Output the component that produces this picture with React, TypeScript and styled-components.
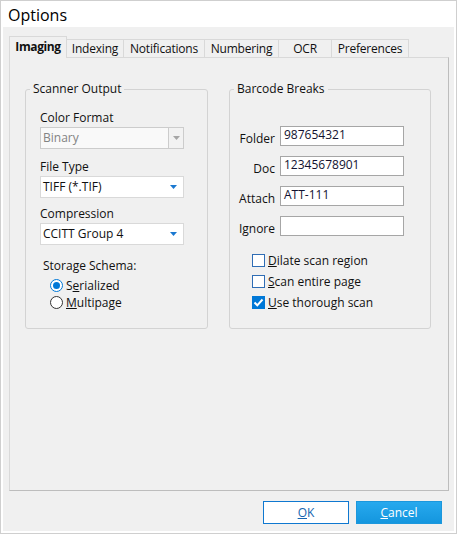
import React from 'react'
import styled, { createGlobalStyle } from 'styled-components'

const GlobalStyle = createGlobalStyle`
  html, body {
    margin: 0;
    padding: 0;
    background: #ffffff;
  }
  body {
    font-family: "Segoe UI", "Open Sans", "Noto Sans", sans-serif;
    font-size: 12px;
    color: #000000;
  }
  * {
    box-sizing: border-box;
  }
`

const Window = styled.div`
  display: flex;
  flex-direction: column;
  width: 457px;
  height: 534px;
  border: 1px solid #cfcfcf;
  background: #ffffff;
  padding: 0 2px 2px 2px;
`

const TitleBar = styled.div`
  height: 26px;
  padding: 2px 0 0 5px;
  font-size: 16px;
  line-height: 24px;
  color: #000;
`

const Body = styled.div`
  display: flex;
  flex-direction: column;
  flex: 1;
  background: #f0f0f0;
  padding: 9px 5px 7px 6px;
`

const TabStrip = styled.div`
  display: flex;
  align-items: flex-end;
  height: 22px;
  margin-bottom: -1px;
`

const Tab = styled.div<{ $w: number; $active?: boolean }>`
  position: relative;
  z-index: ${p => (p.$active ? 2 : 1)};
  width: ${p => p.$w}px;
  height: ${p => (p.$active ? 22 : 19)}px;
  margin-left: -1px;
  &:first-child {
    margin-left: 0;
  }
  border: 1px solid #d9d9d9;
  border-bottom: ${p => (p.$active ? 'none' : '1px solid #d9d9d9')};
  background: #f0f0f0;
  text-align: center;
  line-height: 17px;
  padding-top: ${p => (p.$active ? 1 : 0)}px;
  font-weight: ${p => (p.$active ? 700 : 400)};
  letter-spacing: ${p => (p.$active ? '-0.4px' : '-0.2px')};
  color: #101010;
`

const Panel = styled.div`
  display: flex;
  gap: 21px;
  flex: 1;
  border: 1px solid #d9d9d9;
  border-right-color: #bdbdbd;
  border-bottom-color: #bdbdbd;
  padding: 23px 0 0 15px;
`

const Group = styled.fieldset<{ $w: number; $top: number }>`
  width: ${p => p.$w}px;
  height: 248px;
  margin: 0;
  padding: ${p => p.$top}px 0 0 0;
  border: 1px solid #d3d3d3;
  border-radius: 3px;
  min-width: 0;
`

const Legend = styled.legend`
  margin-left: 4px;
  padding: 0 3px;
  line-height: 16px;
  color: #101010;
`

const Column = styled.div`
  display: flex;
  flex-direction: column;
  padding-left: 14px;
`

const FieldLabel = styled.div`
  line-height: 16px;
  margin-bottom: 1px;
  color: #101010;
`

const Combo = styled.div<{ $disabled?: boolean; $after: number }>`
  display: flex;
  align-items: center;
  width: 144px;
  height: 22px;
  margin-bottom: ${p => p.$after}px;
  border: 1px solid ${p => (p.$disabled ? '#cccccc' : '#d9d9d9')};
  background: ${p => (p.$disabled ? '#f9f9f9' : '#ffffff')};
  color: ${p => (p.$disabled ? '#838383' : '#101010')};
`

const ComboText = styled.span`
  flex: 1;
  padding-left: 2px;
  line-height: 20px;
`

const DropButton = styled.div<{ $disabled?: boolean }>`
  display: flex;
  align-items: center;
  justify-content: center;
  width: ${p => (p.$disabled ? 15 : 14)}px;
  height: 100%;
  margin-right: ${p => (p.$disabled ? 0 : 3)}px;
  border-left: ${p => (p.$disabled ? '1px solid #cccccc' : 'none')};
  background: ${p => (p.$disabled ? '#f2f2f2' : 'transparent')};
`

const SchemaLabel = styled.div`
  line-height: 16px;
  padding-left: 3px;
  margin-bottom: 3px;
  color: #101010;
`

const OptionList = styled.div<{ $indent: number; $gap: number }>`
  display: flex;
  flex-direction: column;
  gap: ${p => p.$gap}px;
  padding-left: ${p => p.$indent}px;
`

const OptionRow = styled.label`
  display: flex;
  align-items: center;
  gap: 3px;
  height: 17px;
  line-height: 17px;
  color: #101010;
`

const RadioCircle = styled.span<{ $checked?: boolean }>`
  display: flex;
  align-items: center;
  justify-content: center;
  width: 13px;
  height: 13px;
  border-radius: 50%;
  border: 1px solid ${p => (p.$checked ? '#0078d7' : '#333333')};
  background: #ffffff;
  &::after {
    content: '';
    display: ${p => (p.$checked ? 'block' : 'none')};
    width: 7px;
    height: 7px;
    border-radius: 50%;
    background: #0078d7;
  }
`

const CheckBox = styled.span<{ $checked?: boolean }>`
  display: flex;
  align-items: center;
  justify-content: center;
  width: 13px;
  height: 13px;
  border: 1px solid ${p => (p.$checked ? '#0078d7' : '#2f6db5')};
  background: ${p => (p.$checked ? '#0078d7' : '#ffffff')};
`

const BarcodeGrid = styled.div`
  display: grid;
  grid-template-columns: 45px 124px;
  grid-auto-rows: 20px;
  column-gap: 5px;
  row-gap: 10px;
  margin-bottom: 16px;
`

const RowLabel = styled.div`
  text-align: right;
  line-height: 16px;
  padding-top: 5px;
  color: #101010;
`

const TextBox = styled.div`
  height: 20px;
  border: 1px solid #a6a6a6;
  background: #ffffff;
  padding-left: 3px;
  line-height: 16px;
  color: #121230;
`

const ButtonRow = styled.div`
  display: flex;
  justify-content: flex-end;
  gap: 7px;
  margin-top: 10px;
  padding-right: 7px;
`

const DialogButton = styled.button<{ $primary?: boolean }>`
  width: 86px;
  height: 23px;
  padding: 0;
  font-family: inherit;
  font-size: 12px;
  border: 1px solid ${p => (p.$primary ? '#1c97dc' : '#0f78d0')};
  background: ${p => (p.$primary ? 'linear-gradient(#27a9ee, #1496de)' : '#ffffff')};
  color: ${p => (p.$primary ? '#ffffff' : '#1565b0')};
`

function Arrow({ disabled }: { disabled?: boolean }) {
  return (
    <svg width="7" height="4" viewBox="0 0 7 4">
      <polygon points="0,0 7,0 3.5,4" fill={disabled ? '#a6a6a6' : '#1a78d0'} />
    </svg>
  )
}

function Check() {
  return (
    <svg width="11" height="11" viewBox="0 0 11 11">
      <polyline points="1.5,5.5 4.3,8.3 9.5,2.5" fill="none" stroke="#ffffff" strokeWidth="2" />
    </svg>
  )
}

const tabs = [
  { name: 'Imaging', w: 58 },
  { name: 'Indexing', w: 58 },
  { name: 'Notifications', w: 82 },
  { name: 'Numbering', w: 75 },
  { name: 'OCR', w: 54 },
  { name: 'Preferences', w: 78 },
]

const barcodes = [
  { label: 'Folder', value: '987654321' },
  { label: 'Doc', value: '12345678901' },
  { label: 'Attach', value: 'ATT-111' },
  { label: 'Ignore', value: '' },
]

export default function App() {
  return (
    <>
      <GlobalStyle />
      <Window>
        <TitleBar>Options</TitleBar>
        <Body>
          <TabStrip>
            {tabs.map((t, i) => (
              <Tab key={t.name} $w={t.w} $active={i === 0}>
                {t.name}
              </Tab>
            ))}
          </TabStrip>

          <Panel>
            <Group $w={183} $top={13}>
              <Legend>Scanner Output</Legend>
              <Column>
                <FieldLabel>Color Format</FieldLabel>
                <Combo $disabled $after={10}>
                  <ComboText>Binary</ComboText>
                  <DropButton $disabled>
                    <Arrow disabled />
                  </DropButton>
                </Combo>

                <FieldLabel>File Type</FieldLabel>
                <Combo $after={8}>
                  <ComboText>TIFF (*.TIF)</ComboText>
                  <DropButton>
                    <Arrow />
                  </DropButton>
                </Combo>

                <FieldLabel>Compression</FieldLabel>
                <Combo $after={13}>
                  <ComboText>CCITT Group 4</ComboText>
                  <DropButton>
                    <Arrow />
                  </DropButton>
                </Combo>

                <SchemaLabel>Storage Schema:</SchemaLabel>
                <OptionList $indent={10} $gap={0}>
                  <OptionRow>
                    <RadioCircle $checked />
                    <span>S<u>e</u>rialized</span>
                  </OptionRow>
                  <OptionRow>
                    <RadioCircle />
                    <span><u>M</u>ultipage</span>
                  </OptionRow>
                </OptionList>
              </Column>
            </Group>

            <Group $w={202} $top={29}>
              <Legend>Barcode Breaks</Legend>
              <BarcodeGrid>
                {barcodes.map(b => (
                  <React.Fragment key={b.label}>
                    <RowLabel>{b.label}</RowLabel>
                    <TextBox>{b.value}</TextBox>
                  </React.Fragment>
                ))}
              </BarcodeGrid>
              <OptionList $indent={22} $gap={4}>
                <OptionRow>
                  <CheckBox />
                  <span><u>D</u>ilate scan region</span>
                </OptionRow>
                <OptionRow>
                  <CheckBox />
                  <span><u>S</u>can entire page</span>
                </OptionRow>
                <OptionRow>
                  <CheckBox $checked>
                    <Check />
                  </CheckBox>
                  <span><u>U</u>se thorough scan</span>
                </OptionRow>
              </OptionList>
            </Group>
          </Panel>

          <ButtonRow>
            <DialogButton>
              <u>O</u>K
            </DialogButton>
            <DialogButton $primary>
              <u>C</u>ancel
            </DialogButton>
          </ButtonRow>
        </Body>
      </Window>
    </>
  )
}
